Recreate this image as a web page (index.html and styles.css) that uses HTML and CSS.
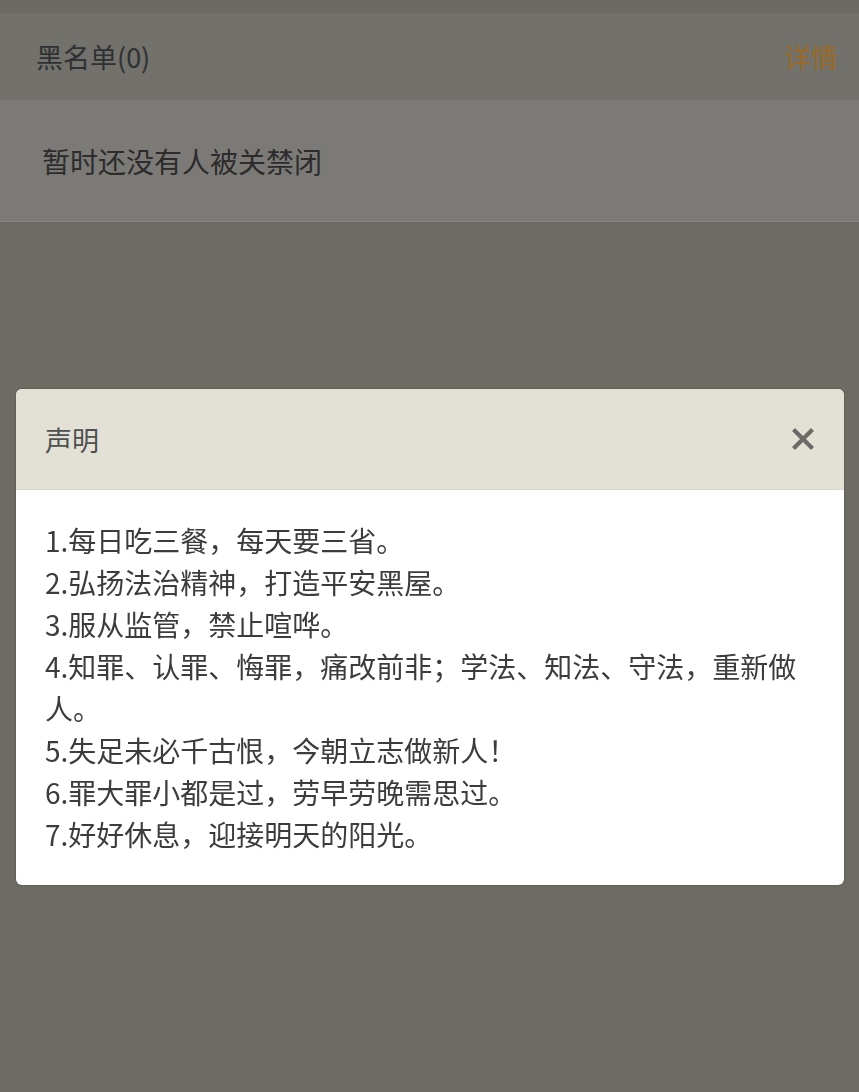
FILE: index.html
```html
<!DOCTYPE html>
<html lang="zh-CN">
<head>
    <meta charset="UTF-8">
    <meta name="viewport" content="width=device-width, initial-scale=1.0">
    <title>黑名单</title>
    <link rel="stylesheet" href="styles.css">
</head>
<body>
    <div class="page">
        <div class="list-head">
            <span class="list-title">黑名单(0)</span>
            <a class="list-more">详情</a>
        </div>
        <div class="list-empty">暂时还没有人被关禁闭</div>
    </div>

    <div class="mask">
        <div class="dialog">
            <div class="dialog-head">
                <span class="dialog-title">声明</span>
                <span class="dialog-close">
                    <svg width="22" height="22" viewBox="0 0 22 22">
                        <path d="M3 3 L19 19 M19 3 L3 19" stroke="#6b6a67" stroke-width="4.2" stroke-linecap="square"/>
                    </svg>
                </span>
            </div>
            <div class="dialog-body">
                <p>1.每日吃三餐，每天要三省。</p>
                <p>2.弘扬法治精神，打造平安黑屋。</p>
                <p>3.服从监管，禁止喧哗。</p>
                <p>4.知罪、认罪、悔罪，痛改前非；学法、知法、守法，重新做人。</p>
                <p>5.失足未必千古恨，今朝立志做新人！</p>
                <p>6.罪大罪小都是过，劳早劳晚需思过。</p>
                <p>7.好好休息，迎接明天的阳光。</p>
            </div>
        </div>
    </div>
</body>
</html>
```

FILE: styles.css
```css
html, body {
    margin: 0;
    padding: 0;
}
body {
    font-family: "Noto Sans CJK SC", "Noto Sans", sans-serif;
    background-color: #6d6b64;
    min-height: 1092px;
}
.page {
    padding-top: 13px;
    background-color: #6b6a64;
}
.list-head {
    height: 87px;
    display: flex;
    justify-content: space-between;
    align-items: center;
    padding: 0 21px 0 36px;
    background-color: #72716b;
    font-size: 27px;
}
.list-title {
    color: #2f3033;
}
.list-more {
    color: #9a6a26;
}
.list-empty {
    height: 121px;
    display: flex;
    align-items: center;
    padding-left: 42px;
    background-color: #7b7a77;
    border-bottom: 1px solid #85847f;
    color: #2d2b2b;
    font-size: 28px;
}
.mask {
    position: fixed;
    top: 0;
    left: 0;
    right: 0;
    bottom: 0;
}
.dialog {
    position: absolute;
    top: 389px;
    left: 16px;
    right: 15px;
    background-color: #fff;
    border-radius: 6px;
    overflow: hidden;
    box-shadow: 0 0 2px rgba(0,0,0,0.35);
}
.dialog-head {
    height: 100px;
    display: flex;
    justify-content: space-between;
    align-items: center;
    padding: 0 30px 0 29px;
    background-color: #e3e1d6;
    border-bottom: 1px solid #d8d6cc;
}
.dialog-title {
    font-size: 27px;
    color: #4f5052;
}
.dialog-close {
    display: flex;
}
.dialog-body {
    padding: 29px 28px 30px 29px;
    font-size: 28px;
    line-height: 42px;
    color: #3c3c3e;
}
.dialog-body p {
    margin: 0;
}
```
